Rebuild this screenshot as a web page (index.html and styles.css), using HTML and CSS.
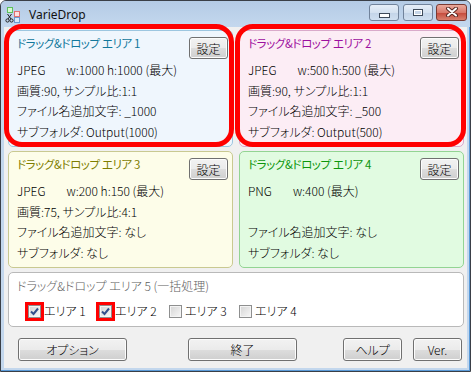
FILE: index.html
```html
<!DOCTYPE html>
<html lang="ja">
<head>
  <meta charset="UTF-8" />
  <title>VarieDrop</title>
  <link rel="stylesheet" href="styles.css">
</head>
<body>
  <div class="window">
    <div class="titlebar">
      <svg class="app-icon" width="16" height="17" viewBox="0 0 16 17">
        <rect x="2.5" y="1.5" width="5" height="5" fill="#d8f8d0" stroke="#5cc05c"/>
        <rect x="9.5" y="5.5" width="5" height="5" fill="#ffe0e0" stroke="#e07070"/>
        <rect x="9.5" y="11.5" width="5" height="5" fill="#d8e8f8" stroke="#6a9ad0"/>
        <circle cx="2.5" cy="14.5" r="1.6" fill="none" stroke="#222" stroke-width="1"/>
        <circle cx="6.5" cy="14.5" r="1.6" fill="none" stroke="#222" stroke-width="1"/>
        <path d="M2.5 8 L6 13 M6.5 8 L3 13" stroke="#222" stroke-width="1"/>
      </svg>
      <span class="title">VarieDrop</span>
      <div class="caption-buttons">
        <span class="cap cap-min"><i></i></span>
        <span class="cap cap-max"><i></i></span>
        <span class="cap cap-close">
          <svg width="14" height="10" viewBox="0 0 14 10">
            <path d="M3 1.5 L11 8.5 M11 1.5 L3 8.5" stroke="#5a2a24" stroke-width="4" stroke-linecap="round"/>
            <path d="M3 1.5 L11 8.5 M11 1.5 L3 8.5" stroke="#fff" stroke-width="2" stroke-linecap="round"/>
          </svg>
        </span>
      </div>
    </div>

    <div class="client">
      <div class="areas">
        <section class="area area-1">
          <div class="area-head">
            <span class="area-title">ドラッグ&amp;ドロップ エリア 1</span>
            <button class="btn btn-set">設定</button>
          </div>
          <div class="area-body">
            <div>JPEG<span class="size">w:1000 h:1000 (最大)</span></div>
            <div>画質:90, サンプル比:1:1</div>
            <div>ファイル名追加文字: _1000</div>
            <div>サブフォルダ: Output(1000)</div>
          </div>
        </section>
        <section class="area area-2">
          <div class="area-head">
            <span class="area-title">ドラッグ&amp;ドロップ エリア 2</span>
            <button class="btn btn-set">設定</button>
          </div>
          <div class="area-body">
            <div>JPEG<span class="size">w:500 h:500 (最大)</span></div>
            <div>画質:90, サンプル比:1:1</div>
            <div>ファイル名追加文字: _500</div>
            <div>サブフォルダ: Output(500)</div>
          </div>
        </section>
        <section class="area area-3">
          <div class="area-head">
            <span class="area-title">ドラッグ&amp;ドロップ エリア 3</span>
            <button class="btn btn-set">設定</button>
          </div>
          <div class="area-body">
            <div>JPEG<span class="size">w:200 h:150 (最大)</span></div>
            <div>画質:75, サンプル比:4:1</div>
            <div>ファイル名追加文字: なし</div>
            <div>サブフォルダ: なし</div>
          </div>
        </section>
        <section class="area area-4">
          <div class="area-head">
            <span class="area-title">ドラッグ&amp;ドロップ エリア 4</span>
            <button class="btn btn-set">設定</button>
          </div>
          <div class="area-body">
            <div>PNG<span class="size">w:400 (最大)</span></div>
            <div>&nbsp;</div>
            <div>ファイル名追加文字: なし</div>
            <div>サブフォルダ: なし</div>
          </div>
        </section>
      </div>

      <section class="batch">
        <div class="batch-title">ドラッグ&amp;ドロップ エリア 5 (一括処理)</div>
        <div class="checks">
          <label class="check"><span class="box checked marked"></span>エリア 1</label>
          <label class="check"><span class="box checked marked"></span>エリア 2</label>
          <label class="check"><span class="box"></span>エリア 3</label>
          <label class="check"><span class="box"></span>エリア 4</label>
        </div>
      </section>

      <div class="actions">
        <button class="btn btn-option">オプション</button>
        <button class="btn btn-exit">終了</button>
        <button class="btn btn-help">ヘルプ</button>
        <button class="btn btn-ver">Ver.</button>
      </div>
    </div>

    <div class="mark mark-1"></div>
    <div class="mark mark-2"></div>
  </div>
</body>
</html>
```

FILE: styles.css
```css
body {
  margin: 0;
  font-family: "Noto Sans CJK JP", sans-serif;
  font-size: 12px;
  font-weight: 300;
  color: #000;
  background: #fff;
}
.window {
  position: relative;
  width: 471px;
  height: 372px;
  box-sizing: border-box;
  border: 1px solid #3a3f47;
  border-radius: 6px 6px 0 0;
  background: #c3d7ed;
  box-shadow: inset -1px -1px 0 #5a9ad8;
  overflow: hidden;
}
.titlebar {
  display: flex;
  align-items: center;
  height: 26px;
  background: linear-gradient(#b4cbe5, #c4d8ee);
}
.app-icon {
  margin-left: 4px;
  margin-top: 1px;
}
.title {
  margin-left: 8px;
  font-family: "Noto Sans", sans-serif;
  font-size: 12px;
  font-weight: 400;
  color: #111;
}
.caption-buttons {
  display: flex;
  margin-left: auto;
  margin-right: 3px;
  margin-top: -4px;
}
.cap {
  display: flex;
  align-items: center;
  justify-content: center;
  width: 28px;
  height: 15px;
  border: 1px solid #71839b;
  border-radius: 3px;
  background: linear-gradient(#e6eef8 0%, #d4e1f0 50%, #c3d4e8 51%, #cfdff0 100%);
}
.cap-max {
  margin-left: 4px;
}
.cap-close {
  margin-left: 3px;
  width: 29px;
  border-color: #7a3a32;
  background: linear-gradient(#e9a99c 0%, #d9786a 50%, #c5483a 51%, #d8806e 100%);
}
.cap-min i {
  display: block;
  width: 9px;
  height: 3px;
  margin-top: 6px;
  border: 1px solid #3e4a5a;
  background: #fff;
}
.cap-max i {
  display: block;
  width: 8px;
  height: 5px;
  border: 1px solid #3e4a5a;
  box-shadow: inset 0 0 0 1px #fff;
  background: #c7d6e8;
}
.client {
  height: 341px;
  margin: 0 3px;
  padding: 3px 3px 0 4px;
  box-sizing: border-box;
  background: #f0f0f0;
}
.areas {
  display: grid;
  grid-template-columns: 225px 225px;
  grid-auto-rows: 117px;
  column-gap: 6px;
  row-gap: 4px;
}
.area {
  box-sizing: border-box;
  border: 1px solid;
  border-radius: 5px;
  padding: 0 4px 0 8px;
  font-feature-settings: "palt" 1;
}
.area-1 { background: #eff6fd; border-color: #9cc6e0; }
.area-2 { background: #fcedf5; border-color: #d9aaca; }
.area-3 { background: #fdfde9; border-color: #c9c991; }
.area-4 { background: #e1fbe1; border-color: #93d493; }
.area-1 .area-title { color: #12789c; }
.area-2 .area-title { color: #9c109f; }
.area-3 .area-title { color: #7e7e00; }
.area-4 .area-title { color: #0c960c; }
.area-head {
  display: flex;
  justify-content: space-between;
  align-items: flex-start;
}
.area-title {
  padding-top: 4px;
  font-size: 11.5px;
  font-weight: 400;
  letter-spacing: -0.4px;
  line-height: 16px;
}
.btn {
  display: flex;
  align-items: center;
  justify-content: center;
  box-sizing: border-box;
  height: 23px;
  padding: 0;
  font-family: "Noto Sans CJK JP", sans-serif;
  font-size: 12px;
  font-weight: 300;
  font-feature-settings: "palt" 1;
  color: #000;
  border: 1px solid #707070;
  border-radius: 3px;
  background: linear-gradient(#f2f2f2 0%, #ebebeb 50%, #dddddd 51%, #cfcfcf 100%);
  box-shadow: inset 0 0 0 1px #fcfcfc;
}
.btn-set {
  width: 39px;
  height: 22px;
  margin-top: 6px;
}
.area-body {
  margin-top: 1px;
  line-height: 20.5px;
}
.size {
  margin-left: 21px;
}
.batch {
  height: 55px;
  margin-top: 4px;
  box-sizing: border-box;
  border: 1px solid #b9b9b9;
  border-radius: 5px;
  background: #fff;
  padding: 5px 8px 0 8px;
  font-feature-settings: "palt" 1;
}
.batch-title {
  line-height: 16px;
  color: #5e5e5e;
}
.checks {
  display: grid;
  grid-template-columns: 71px 70px 70px 70px;
  margin: 8px 0 0 11px;
}
.check {
  display: flex;
  align-items: center;
  gap: 3px;
  line-height: 18px;
}
.box {
  width: 13px;
  height: 13px;
  box-sizing: border-box;
  border: 1px solid #8e8f8f;
  background: linear-gradient(135deg, #d4d4d4, #f8f8f8);
  box-shadow: inset 0 0 0 1px #f4f4f4;
}
.box.checked {
  background:
    url("data:image/svg+xml,%3Csvg xmlns='http://www.w3.org/2000/svg' width='11' height='11'%3E%3Cpath d='M2 5.5 L4.5 8 L9 2.5' fill='none' stroke='%23334f8c' stroke-width='2'/%3E%3C/svg%3E") center/11px 11px no-repeat,
    linear-gradient(135deg, #d4d4d4, #f8f8f8);
}
.box.marked {
  box-shadow: inset 0 0 0 1px #f4f4f4, 0 0 0 3px #ff0000;
}
.actions {
  display: flex;
  margin-top: 11px;
  padding-left: 10px;
}
.btn-option { width: 109px; }
.btn-exit { width: 109px; margin-left: 61px; }
.btn-help { width: 59px; margin-left: 46px; }
.btn-ver { width: 49px; margin-left: 11px; }

/* red highlight frames drawn over the first two areas */
.mark {
  position: absolute;
  top: 23px;
  height: 123px;
  box-sizing: border-box;
  border: 5px solid #ff0000;
  border-radius: 18px;
  pointer-events: none;
}
.mark-1 { left: 3px; width: 230px; }
.mark-2 { left: 234px; width: 231px; }
```
